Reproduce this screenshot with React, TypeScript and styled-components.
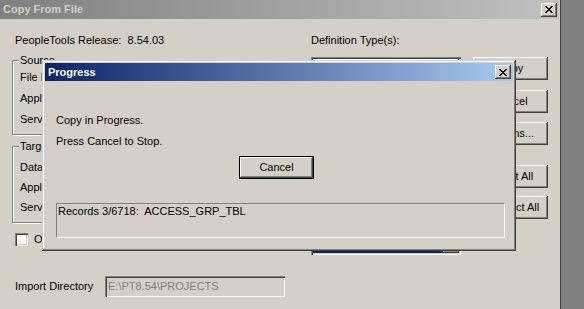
import * as React from 'react';
import styled, { createGlobalStyle } from 'styled-components';

const face = '#d4d0c8';

const raised = `inset -1px -1px #404040, inset 1px 1px #ffffff, inset -2px -2px #808080, inset 2px 2px ${face}`;
const sunken = `inset 1px 1px #808080, inset 2px 2px #404040, inset -1px -1px #ffffff, inset -2px -2px ${face}`;

const GlobalStyle = createGlobalStyle`
	html, body {
		margin: 0;
		padding: 0;
		background: #808080;
	}
	body {
		font-family: 'Liberation Sans', Arial, sans-serif;
		font-size: 11px;
		color: #000;
	}
`;

const Screen = styled.div`
	width: 584px;
	height: 309px;
	display: flex;
	overflow: hidden;
	background: #808080;
`;

const Window = styled.div`
	position: relative;
	width: 561px;
	height: 309px;
	box-sizing: border-box;
	background: ${face};
	border-right: 1px solid #404040;
	display: flex;
	flex-direction: column;
`;

const TitleBar = styled.div<{ $active?: boolean; $height: number }>`
	height: ${p => p.$height}px;
	flex-shrink: 0;
	box-sizing: border-box;
	display: flex;
	align-items: center;
	justify-content: space-between;
	padding: 0 2px 0 3px;
	margin-right: ${p => (p.$active ? 0 : 1)}px;
	background: linear-gradient(to right, ${p => (p.$active ? '#0a246a, #a6caf0' : '#808080, #c0c0c0')});
	color: ${p => (p.$active ? '#ffffff' : face)};
	font-weight: bold;
	font-size: 11px;
	line-height: 13px;
`;

const CloseButton = styled.div`
	width: 16px;
	height: 14px;
	background: ${face};
	box-shadow: ${raised};
	display: flex;
	align-items: center;
	justify-content: center;
	svg {
		display: block;
		margin-left: -1px;
	}
`;

const Body = styled.div`
	display: flex;
	padding: 15px 0 0 12px;
`;

const Column = styled.div<{ $width: number; $ml?: number }>`
	width: ${p => p.$width}px;
	margin-left: ${p => p.$ml || 0}px;
	display: flex;
	flex-direction: column;
	flex-shrink: 0;
`;

const Caption = styled.div<{ $ml?: number }>`
	height: 13px;
	line-height: 13px;
	margin-left: ${p => p.$ml || 0}px;
	white-space: nowrap;
`;

const GroupBox = styled.div<{ $height: number; $mt: number; $pt: number; $gap: number }>`
	position: relative;
	box-sizing: border-box;
	height: ${p => p.$height}px;
	margin-top: ${p => p.$mt}px;
	border: 1px solid #808080;
	box-shadow: inset 1px 1px #ffffff, 1px 1px #ffffff;
	padding: ${p => p.$pt}px 0 0 7px;
	display: flex;
	flex-direction: column;
	gap: ${p => p.$gap}px;
`;

const Legend = styled.span`
	position: absolute;
	top: -7px;
	left: 6px;
	padding: 0 1px;
	background: ${face};
	line-height: 13px;
`;

const FieldRow = styled.div`
	display: flex;
	line-height: 13px;
	height: 13px;
	white-space: nowrap;
	span:first-child {
		width: 110px;
	}
`;

const CheckRow = styled.div`
	display: flex;
	align-items: center;
	gap: 6px;
	margin: 10px 0 0 3px;
	height: 13px;
	line-height: 13px;
	white-space: nowrap;
`;

const CheckBox = styled.div`
	width: 13px;
	height: 13px;
	box-sizing: border-box;
	background: #ffffff;
	box-shadow: ${sunken};
`;

const ImportRow = styled.div`
	display: flex;
	align-items: center;
	margin: 30px 0 0 3px;
	height: 21px;
	span {
		width: 90px;
		line-height: 13px;
	}
`;

const EditBox = styled.div`
	width: 180px;
	height: 21px;
	box-sizing: border-box;
	padding: 4px 0 0 3px;
	line-height: 13px;
	background: ${face};
	box-shadow: ${sunken};
	color: #808080;
`;

const ListBox = styled.div`
	margin-top: 10px;
	width: 150px;
	height: 198px;
	box-sizing: border-box;
	padding: 2px;
	background: #ffffff;
	box-shadow: ${sunken};
	display: flex;
`;

const ListItems = styled.div`
	flex: 1;
	overflow: hidden;
	display: flex;
	flex-direction: column;
	justify-content: flex-end;
`;

const ListItem = styled.div<{ $selected?: boolean }>`
	height: 13px;
	line-height: 13px;
	padding-left: 2px;
	white-space: nowrap;
	flex-shrink: 0;
	background: ${p => (p.$selected ? '#0a246a' : 'transparent')};
	color: ${p => (p.$selected ? '#ffffff' : '#000')};
`;

const ScrollBar = styled.div`
	width: 16px;
	display: flex;
	flex-direction: column;
	justify-content: space-between;
	background: repeating-conic-gradient(#ffffff 0 25%, ${face} 0 50%) 0 0 / 2px 2px;
`;

const ScrollButton = styled.div`
	width: 16px;
	height: 16px;
	background: ${face};
	box-shadow: ${raised};
	display: flex;
	align-items: center;
	justify-content: center;
`;

const PushButton = styled.div<{ $mt: number }>`
	margin-top: ${p => p.$mt}px;
	width: 75px;
	height: 23px;
	box-sizing: border-box;
	background: ${face};
	box-shadow: ${raised};
	display: flex;
	align-items: center;
	justify-content: center;
	line-height: 13px;
	white-space: nowrap;
`;

const Dialog = styled.div`
	position: absolute;
	left: 42px;
	top: 60px;
	width: 474px;
	height: 191px;
	box-sizing: border-box;
	padding: 3px;
	background: ${face};
	box-shadow: inset -1px -1px #404040, inset 1px 1px ${face}, inset -2px -2px #808080, inset 2px 2px #ffffff;
	display: flex;
	flex-direction: column;
`;

const DialogContent = styled.div`
	padding: 33px 8px 0 11px;
	display: flex;
	flex-direction: column;
`;

const Message = styled.div<{ $mt?: number }>`
	margin-top: ${p => p.$mt || 0}px;
	height: 13px;
	line-height: 13px;
`;

const DefaultButton = styled.div`
	margin: 8px 0 0 183px;
	width: 75px;
	height: 23px;
	box-sizing: border-box;
	border: 1px solid #000000;
	background: ${face};
	box-shadow: ${raised};
	display: flex;
	align-items: center;
	justify-content: center;
	line-height: 13px;
`;

const StatusBox = styled.div`
	margin-top: 24px;
	height: 35px;
	box-sizing: border-box;
	border-top: 1px solid #808080;
	border-left: 1px solid #808080;
	border-right: 1px solid #ffffff;
	border-bottom: 1px solid #ffffff;
	padding: 1px 0 0 1px;
	line-height: 13px;
	white-space: pre;
`;

const CloseGlyph = () => (
	<svg width='8' height='7' viewBox='0 0 8 7' shapeRendering='crispEdges'>
		<path
			fill='#000'
			d='M0 0h2v1H0zM6 0h2v1H6zM1 1h2v1H1zM5 1h2v1H5zM2 2h4v1H2zM3 3h2v1H3zM2 4h4v1H2zM1 5h2v1H1zM5 5h2v1H5zM0 6h2v1H0zM6 6h2v1H6z'
		/>
	</svg>
);

const DownArrow = () => (
	<svg width='7' height='4' viewBox='0 0 7 4' shapeRendering='crispEdges'>
		<path fill='#000' d='M0 0h7v1H0zM1 1h5v1H1zM2 2h3v1H2zM3 3h1v1H3z' />
	</svg>
);

const definitionTypes = [
	'Records',
	'Indexes',
	'Fields',
	'Field Formats',
	'Translates',
	'Pages',
	'Menus',
	'Components',
	'Record PeopleCode',
	'Menu PeopleCode',
	'Queries',
	'Tree Structures',
	'Trees',
	'Access Groups',
	'Server Definitions',
];

export default function App() {
	return (
		<Screen>
			<GlobalStyle />
			<Window>
				<TitleBar $height={19}>
					<span>Copy From File</span>
					<CloseButton><CloseGlyph /></CloseButton>
				</TitleBar>
				<Body>
					<Column $width={283}>
						<Caption $ml={3}>PeopleTools Release:&nbsp; 8.54.03</Caption>
						<GroupBox $height={75} $mt={13} $pt={10} $gap={8}>
							<Legend>Source</Legend>
							<FieldRow><span>File Name:</span><span>PROJECT.XML</span></FieldRow>
							<FieldRow><span>Application Release:</span><span>9.2</span></FieldRow>
							<FieldRow><span>Service Pack:</span><span>0</span></FieldRow>
						</GroupBox>
						<GroupBox $height={77} $mt={11} $pt={14} $gap={7}>
							<Legend>Target</Legend>
							<FieldRow><span>Database:</span><span>HRDMO</span></FieldRow>
							<FieldRow><span>Application Release:</span><span>9.2</span></FieldRow>
							<FieldRow><span>Service Pack:</span><span>0</span></FieldRow>
						</GroupBox>
						<CheckRow>
							<CheckBox />
							<span>Override project settings</span>
						</CheckRow>
						<ImportRow>
							<span>Import Directory</span>
							<EditBox>E:\PT8.54\PROJECTS</EditBox>
						</ImportRow>
					</Column>
					<Column $width={150} $ml={16}>
						<Caption>Definition Type(s):</Caption>
						<ListBox>
							<ListItems>
								{definitionTypes.map((t, i) => (
									<ListItem key={t} $selected={i === definitionTypes.length - 1}>{t}</ListItem>
								))}
							</ListItems>
							<ScrollBar>
								<ScrollButton />
								<ScrollButton><DownArrow /></ScrollButton>
							</ScrollBar>
						</ListBox>
					</Column>
					<Column $width={75} $ml={12}>
						<PushButton $mt={23}>Copy</PushButton>
						<PushButton $mt={10}>Cancel</PushButton>
						<PushButton $mt={9}>Options...</PushButton>
						<PushButton $mt={20}>Select All</PushButton>
						<PushButton $mt={8}>Deselect All</PushButton>
					</Column>
				</Body>
				<Dialog>
					<TitleBar $active $height={18}>
						<span>Progress</span>
						<CloseButton><CloseGlyph /></CloseButton>
					</TitleBar>
					<DialogContent>
						<Message>Copy in Progress.</Message>
						<Message $mt={8}>Press Cancel to Stop.</Message>
						<DefaultButton>Cancel</DefaultButton>
						<StatusBox>{'Records 3/6718:  ACCESS_GRP_TBL'}</StatusBox>
					</DialogContent>
				</Dialog>
			</Window>
		</Screen>
	);
}
